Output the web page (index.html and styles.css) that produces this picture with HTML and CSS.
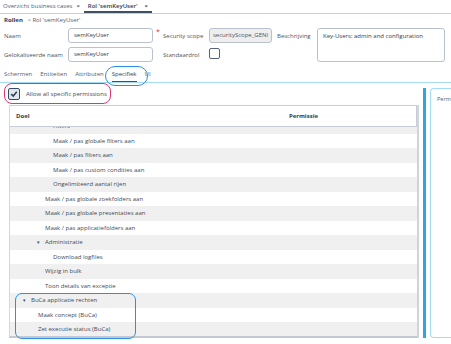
FILE: index.html
```html
<!DOCTYPE html>
<html lang="nl">
<head>
  <meta charset="UTF-8" />
  <title>Rol 'semKeyUser'</title>
  <link rel="stylesheet" href="styles.css">
</head>
<body>

<nav class="tabs">
  <div class="tab">Overzicht business cases<span class="x">&times;</span></div>
  <div class="tab active">Rol 'semKeyUser'<span class="x">&times;</span></div>
</nav>

<div class="crumb"><b>Rollen</b> &gt; Rol 'semKeyUser'</div>

<section class="form">
  <label class="lbl">Naam</label>
  <div class="input">semKeyUser</div>
  <span class="req">*</span>
  <label class="lbl">Security scope</label>
  <div class="input grey">securityScope_GENI</div>
  <label class="lbl desc-lbl">Beschrijving</label>
  <div class="input area">Key-Users: admin and configuration</div>

  <label class="lbl">Gelokaliseerde naam</label>
  <div class="input">semKeyUser</div>
  <span></span>
  <label class="lbl">Standaardrol</label>
  <div><span class="box"></span></div>
</section>

<nav class="subtabs">
  <div class="stab">Schermen</div>
  <div class="stab">Entiteiten</div>
  <div class="stab">Attributen</div>
  <div class="stab active">Specifiek</div>
  <div class="stab">UI</div>
</nav>

<main class="content">
  <div class="left">
    <div class="allow">
      <span class="box checked">
        <svg width="8" height="8" viewBox="0 0 8 8"><path d="M1.2 4.2 L3.2 6 L6.8 1.8" fill="none" stroke="#2f4257" stroke-width="1.6"/></svg>
      </span>
      Allow all specific permissions
    </div>
    <div class="table">
      <div class="thead">
        <div class="th doel">Doel</div>
        <div class="th perm">Permissie</div>
      </div>
      <div class="tbody">
        <div class="rows">
          <div class="row l3">Filters</div>
          <div class="row l3">Maak / pas globale filters aan</div>
          <div class="row l3">Maak / pas filters aan</div>
          <div class="row l3">Maak / pas custom condities aan</div>
          <div class="row l3">Ongelimiteerd aantal rijen</div>
          <div class="row l2">Maak / pas globale zoekfolders aan</div>
          <div class="row l2">Maak / pas globale presentaties aan</div>
          <div class="row l2">Maak / pas applicatiefolders aan</div>
          <div class="row l2"><span class="caret">&#9662;</span>Administratie</div>
          <div class="row l3">Download logfiles</div>
          <div class="row l2">Wijzig in bulk</div>
          <div class="row l2">Toon details van exceptie</div>
          <div class="row l0"><span class="caret">&#9662;</span>BuCa applicatie rechten</div>
          <div class="row l1">Maak concept (BuCa)</div>
          <div class="row l1">Zet executie status (BuCa)</div>
        </div>
      </div>
    </div>
  </div>
  <div class="bar"></div>
  <aside class="panel">Permissie</aside>
</main>

<div class="mark mark-tab"></div>
<div class="mark mark-allow"></div>
<div class="mark mark-buca"></div>

</body>
</html>
```

FILE: styles.css
```css
* { box-sizing: border-box; }
body {
  margin: 0;
  font-family: 'Open Sans', sans-serif;
  font-size: 6px;
  color: #3d4b5c;
  background: #fff;
  width: 451px;
  height: 344px;
  overflow: hidden;
  position: relative;
}
.tabs {
  display: flex;
  height: 14px;
  border-bottom: 1px solid #a5dcf5;
  padding-left: 3px;
  font-size: 6px;
}
.tab {
  padding: 2px 4px 0 0;
  color: #556070;
  line-height: 9px;
}
.tab.active {
  font-weight: 600;
  color: #2f3e50;
  border-bottom: 2px solid #3f5064;
  padding: 2px 4px 0 4px;
}
.x { margin-left: 4px; font-weight: bold; }
.tab.active .x { margin-left: 7px; }
.crumb {
  height: 14px;
  line-height: 13px;
  padding-left: 4px;
  color: #556070;
}
.crumb b { color: #2f3e50; margin-right: 3px; }

.form {
  display: grid;
  grid-template-columns: 68px 85px 10px 46px 64px 44px 128px;
  grid-template-rows: 15px 15px;
  row-gap: 4px;
  height: 34px;
}
.lbl {
  padding-left: 4px;
  align-self: center;
  color: #4a5666;
}
.form > .lbl:nth-child(4), .form > .lbl:nth-child(11) { padding-left: 0; }
.desc-lbl { padding-left: 4px; }
.req { color: #d9334f; font-size: 7px; line-height: 8px; padding-left: 3px; }
.input {
  border: 1px solid #b9c1cc;
  border-radius: 3px;
  padding: 0 5px;
  line-height: 13px;
  color: #2f3e50;
  white-space: nowrap;
  overflow: hidden;
}
.input.grey { background: #eeeeee; color: #4a5666; padding: 0 3px; margin-right: 1px; }
.input.area {
  grid-row: 1 / span 2;
  grid-column: 7;
  line-height: 12px;
  padding-top: 1px;
}
.box {
  display: inline-block;
  width: 11px;
  height: 11px;
  border: 1.3px solid #566477;
  border-radius: 2px;
  margin-top: 1px;
  background: #fff;
}

.subtabs {
  display: flex;
  align-items: flex-end;
  height: 21px;
  border-bottom: 1px solid #a5dcf5;
  padding-left: 4px;
}
.stab {
  margin-right: 8px;
  padding-bottom: 4px;
  line-height: 8px;
  color: #556070;
}
.stab.active {
  color: #2f3e50;
  border-bottom: 1.5px solid #3f5064;
  padding-bottom: 3px;
}

.content {
  display: flex;
  height: 255px;
}
.left {
  width: 419px;
  padding-left: 9px;
}
.allow {
  display: flex;
  align-items: center;
  height: 22px;
  gap: 6px;
  margin-left: -1px;
  color: #3d4b5c;
}
.box.checked {
  width: 12px;
  height: 12px;
  border: 1.6px solid #3a4c62;
  background: #dfe6ee;
  display: flex;
  align-items: center;
  justify-content: center;
  margin-top: 0;
}
.table {
  border-left: 1px solid #d4d8de;
  border-right: 2px solid #cfd4db;
  border-bottom: 2px solid #c2c9d3;
  height: 233px;
  display: flex;
  flex-direction: column;
}
.thead {
  display: flex;
  height: 22px;
  border: 1px solid #c7cdd6;
  border-left: none;
  font-weight: bold;
  color: #2f3e50;
  align-items: center;
  box-shadow: 0 1px 1px #e2e5e9;
}
.th.doel { width: 181px; padding-left: 6px; }
.th.perm { flex: 1; text-align: center; }
.tbody {
  flex: 1;
  overflow: hidden;
}
.rows { margin-top: -8px; }
.row {
  height: 14.5px;
  line-height: 14.5px;
  white-space: nowrap;
  color: #3d4b5c;
}
.row:nth-child(odd) { background: #f0f0f0; }
.row.l0 { padding-left: 21px; }
.row.l1 { padding-left: 28px; }
.row.l2 { padding-left: 35px; }
.row.l3 { padding-left: 43px; }
.caret {
  display: inline-block;
  width: 8px;
  margin-left: -8px;
  font-size: 5px;
  color: #3d4b5c;
}

.bar {
  width: 3px;
  margin: 5px 0 0 4px;
  height: 250px;
  background: #2ea6e4;
}
.panel {
  flex: 1;
  margin: 5px 0 0 4px;
  height: 250px;
  border: 1px solid #a5dcf5;
  border-right: none;
  border-radius: 4px 0 0 4px;
  padding: 6px 0 0 6px;
  white-space: nowrap;
  overflow: hidden;
  font-size: 5.5px;
  color: #556070;
}

.mark {
  position: absolute;
  border: 1.5px solid #2a8fe6;
  pointer-events: none;
}
.mark-tab { left: 105px; top: 66px; width: 43px; height: 20px; border-radius: 10px; }
.mark-allow { left: 4px; top: 83px; width: 107px; height: 21px; border-radius: 8px; border-color: #e0356e; }
.mark-buca { left: 15px; top: 293px; width: 121px; height: 46px; border-radius: 7px; }
```
